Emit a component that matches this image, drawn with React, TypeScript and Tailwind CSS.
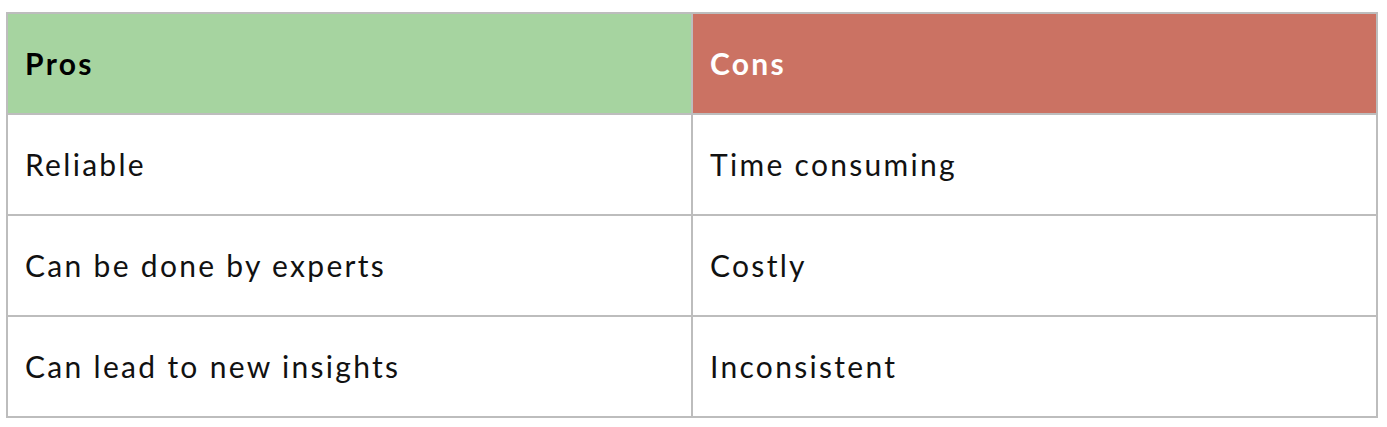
import React from 'react';

const rows = [
  ['Reliable', 'Time consuming'],
  ['Can be done by experts', 'Costly'],
  ['Can lead to new insights', 'Inconsistent'],
];

const App: React.FC = () => {
  return (
    <div className="min-h-screen bg-white pl-[6px] pr-[9px] pt-[12px]" style={{ fontFamily: 'Lato, "Noto Sans", sans-serif' }}>
      <table className="w-full border-collapse table-fixed text-[30px] tracking-[2.3px] text-[#111]">
        <thead>
          <tr className="h-[101px]">
            <th className="border-2 border-[#bdbdbd] bg-[#a6d4a0] text-left font-bold px-[17px] text-black">Pros</th>
            <th className="border-2 border-[#bdbdbd] bg-[#cb7263] text-left font-bold px-[17px] text-white">Cons</th>
          </tr>
        </thead>
        <tbody>
          {rows.map(([pro, con]) => (
            <tr key={pro} className="h-[101px]">
              <td className="border-2 border-[#bdbdbd] px-[17px]">{pro}</td>
              <td className="border-2 border-[#bdbdbd] px-[17px]">{con}</td>
            </tr>
          ))}
        </tbody>
      </table>
    </div>
  );
};

export default App;
